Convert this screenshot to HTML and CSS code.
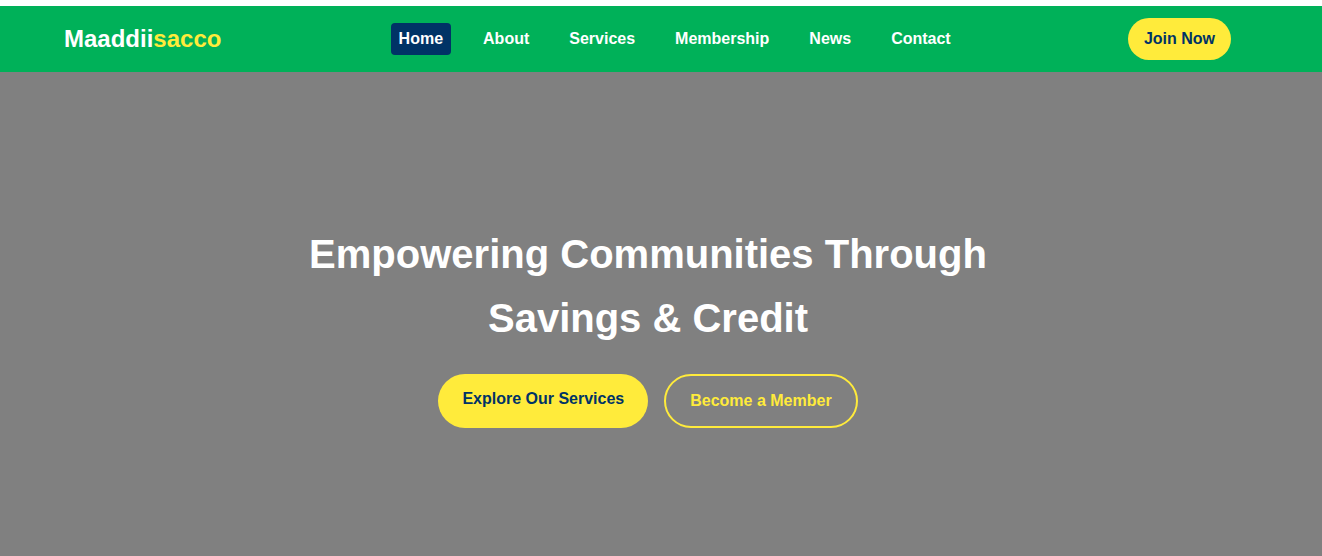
FILE: index.html
```html
<!DOCTYPE html>
<html lang="en">
<head>
<meta charset="utf-8">
<title>Maaddiisacco</title>
<link rel="stylesheet" href="styles.css">
</head>
<body>
<header class="site-header">
  <a class="logo" href="#">Maaddii<span class="logo-accent">sacco</span></a>
  <nav class="main-nav">
    <a class="nav-link active" href="#">Home</a>
    <a class="nav-link" href="#">About</a>
    <a class="nav-link" href="#">Services</a>
    <a class="nav-link" href="#">Membership</a>
    <a class="nav-link" href="#">News</a>
    <a class="nav-link" href="#">Contact</a>
  </nav>
  <a class="btn-join" href="#">Join Now</a>
</header>
<section class="hero">
  <div class="hero-content">
    <h1 class="hero-title">Empowering Communities Through<br>Savings &amp; Credit</h1>
    <div class="hero-actions">
      <a class="btn btn-primary" href="#">Explore Our Services</a>
      <a class="btn btn-outline" href="#">Become a Member</a>
    </div>
  </div>
</section>
</body>
</html>
```
FILE: styles.css
```css
* { box-sizing: border-box; }

html, body {
  margin: 0;
  padding: 0;
}

body {
  padding-top: 6px;
  background: #ffffff;
  font-family: "Liberation Sans", Arial, sans-serif;
  line-height: 1.6;
  overflow: hidden;
}

a { text-decoration: none; }

.site-header {
  display: flex;
  align-items: center;
  justify-content: space-between;
  background: #00b159;
  padding: 12px 91px 12px 64px;
}

.logo {
  font-size: 24px;
  font-weight: 700;
  color: #ffffff;
}

.logo-accent { color: #ffeb3b; }

.main-nav {
  display: flex;
  align-items: center;
  gap: 24px;
}

.nav-link {
  color: #ffffff;
  font-weight: 700;
  font-size: 16px;
  padding: 3.2px 8px;
  border-radius: 4px;
}

.nav-link.active {
  background: #003366;
}

.btn-join {
  background: #ffeb3b;
  color: #003366;
  font-weight: 700;
  font-size: 16px;
  padding: 8px 16px;
  border-radius: 999px;
}

.hero {
  background: #808080;
  min-height: 507px;
  display: flex;
  align-items: center;
  justify-content: center;
  padding-right: 26px;
}

.hero-content {
  text-align: center;
}

.hero-title {
  margin: 0 0 24px;
  font-size: 40px;
  line-height: 1.6;
  font-weight: 700;
  color: #ffffff;
}

.hero-actions {
  display: flex;
  justify-content: center;
  gap: 16px;
}

.btn {
  font-size: 16px;
  font-weight: 700;
  padding: 12px 24px;
  border-radius: 999px;
}

.btn-primary {
  background: #ffeb3b;
  color: #003366;
}

.btn-outline {
  border: 2px solid #ffeb3b;
  color: #ffeb3b;
}
```
